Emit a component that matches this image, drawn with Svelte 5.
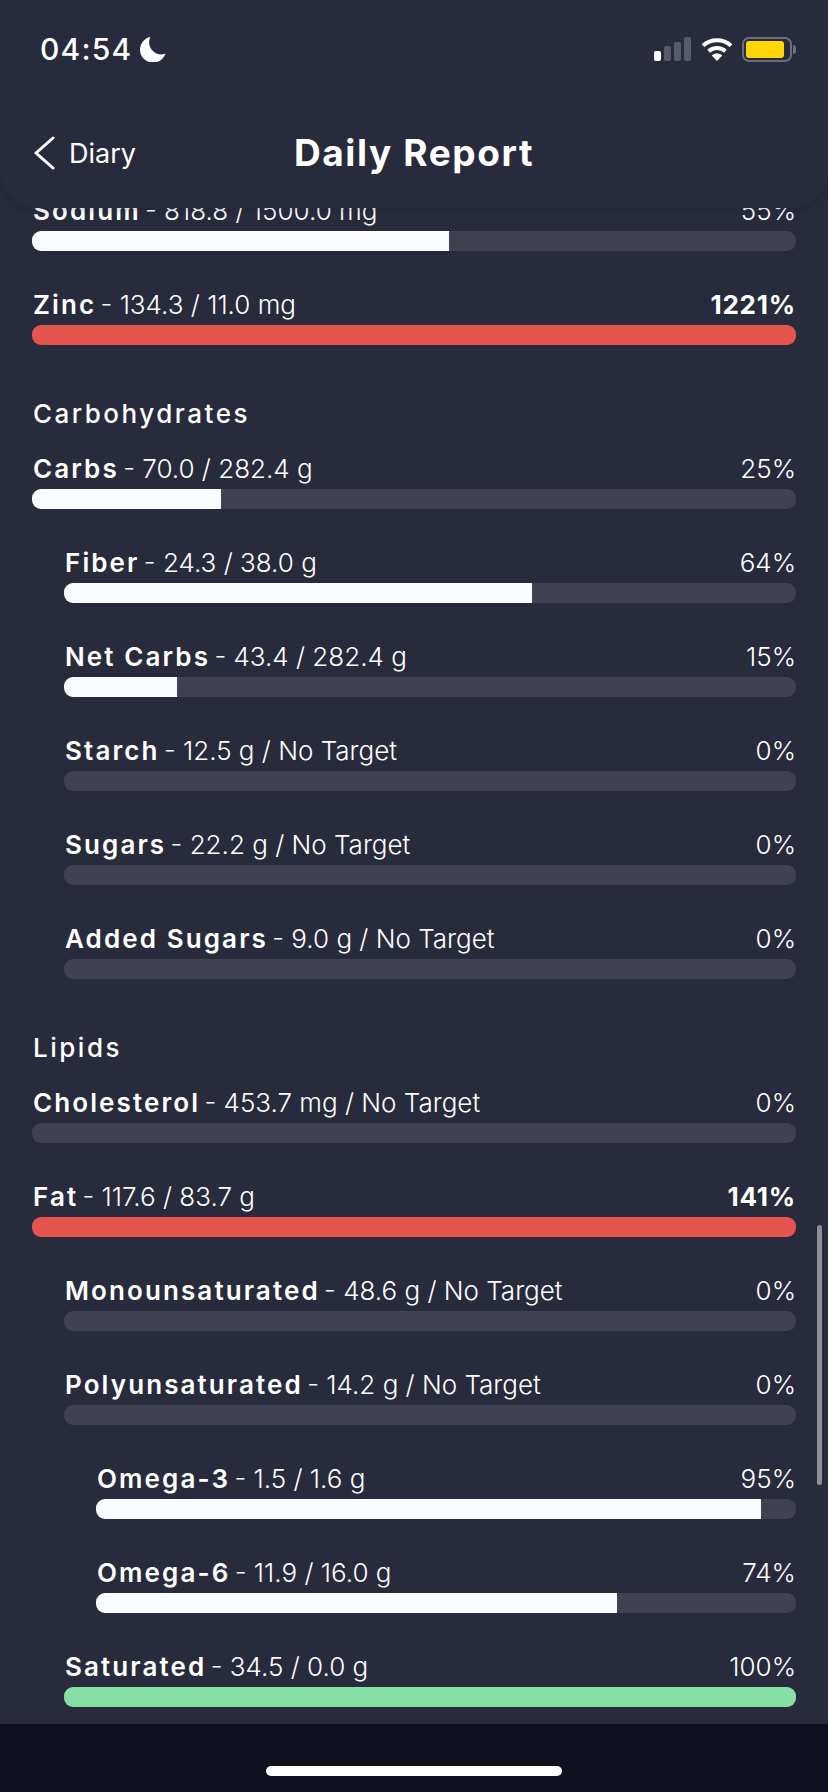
<script>
  const sections = [
    { title: null, rows: [
      { name: 'Sodium', value: '818.8 / 1500.0 mg', pct: 55, width: 54.6 },
      { name: 'Zinc', value: '134.3 / 11.0 mg', pct: 1221, tone: 'over' }
    ]},
    { title: 'Carbohydrates', rows: [
      { name: 'Carbs', value: '70.0 / 282.4 g', pct: 25, width: 24.8 },
      { name: 'Fiber', value: '24.3 / 38.0 g', pct: 64 },
      { name: 'Net Carbs', value: '43.4 / 282.4 g', pct: 15, width: 15.4 },
      { name: 'Starch', value: '12.5 g / No Target', pct: 0 },
      { name: 'Sugars', value: '22.2 g / No Target', pct: 0 },
      { name: 'Added Sugars', value: '9.0 g / No Target', pct: 0 }
    ].map((r, i) => (i ? { ...r, level: 1 } : r)) },
    { title: 'Lipids', rows: [
      { name: 'Cholesterol', value: '453.7 mg / No Target', pct: 0 },
      { name: 'Fat', value: '117.6 / 83.7 g', pct: 141, tone: 'over' },
      { name: 'Monounsaturated', value: '48.6 g / No Target', pct: 0, level: 1 },
      { name: 'Polyunsaturated', value: '14.2 g / No Target', pct: 0, level: 1 },
      { name: 'Omega-3', value: '1.5 / 1.6 g', pct: 95, level: 2 },
      { name: 'Omega-6', value: '11.9 / 16.0 g', pct: 74, width: 74.4, level: 2 },
      { name: 'Saturated', value: '34.5 / 0.0 g', pct: 100, level: 1, tone: 'good' }
    ]}
  ];
</script>

<div class="page">
  <header class="top">
    <div class="status">
      <div class="clock">
        <span>04:54</span>
        <svg class="moon" viewBox="0 0 24 24" width="26" height="26"><path fill="#fff" d="M9.6 0.6C4 2 0 7 0 12.8 0 19.5 5.4 24.6 12 24.6c5.4 0 10-3.4 11.6-8.4-1.2.5-2.6.8-4 .8-6.2 0-11.2-5-11.2-11.2 0-1.9.5-3.6 1.2-5.2z"/></svg>
      </div>
      <div class="indicators">
        <div class="signal">
          <i class="on s1"></i><i class="s2"></i><i class="s3"></i><i class="s4"></i>
        </div>
        <svg class="wifi" viewBox="0 0 32 24" width="32" height="24">
          <path fill="none" stroke="#fff" stroke-width="4" d="M2 8.6C9.8 1.4 22.2 1.4 30 8.6"/>
          <path fill="none" stroke="#fff" stroke-width="4" d="M7.6 14.2c4.8-4.2 12-4.2 16.8 0"/>
          <path fill="#fff" d="M16 24l-5.2-5.6c3-2.4 7.4-2.4 10.4 0z"/>
        </svg>
        <div class="battery"><div class="charge"></div></div>
        <div class="nub"></div>
      </div>
    </div>
    <div class="nav">
      <div class="back">
        <svg viewBox="0 0 22 34" width="22" height="34"><path fill="none" stroke="#fff" stroke-width="3" stroke-linecap="round" stroke-linejoin="round" d="M20 2L3 17l17 15"/></svg>
        <span>Diary</span>
      </div>
      <h1>Daily Report</h1>
    </div>
  </header>

  <main class="list">
    {#each sections as s}
      <section>
        {#if s.title}<h2>{s.title}</h2>{/if}
        {#each s.rows as r}
          <div class="row lvl{r.level ?? 0}">
            <div class="line">
              <span class="text"><b>{r.name}</b><span class="dash">{' - '}</span>{r.value}</span>
              <span class="pct" class:strong={r.tone === 'over'}>{r.pct}%</span>
            </div>
            <div class="track">
              <div class="fill {r.tone ?? ''}" style="width:{r.width ?? Math.min(r.pct, 100)}%"></div>
            </div>
          </div>
        {/each}
      </section>
    {/each}
    <div class="scrollbar"></div>
  </main>

  <footer class="home"><div class="indicator"></div></footer>
</div>

<style>
  :global(body) {
    margin: 0;
    background: #282b3c;
  }
  .page {
    width: 828px;
    height: 1792px;
    display: flex;
    flex-direction: column;
    background: #282b3c;
    color: #fff;
    font-family: Inter, "Liberation Sans", sans-serif;
    overflow: hidden;
  }
  .top {
    position: relative;
    z-index: 2;
    flex: none;
    height: 208px;
    box-sizing: border-box;
    background: #282b3c;
    border-radius: 0 0 36px 36px;
    box-shadow: 0 2px 6px rgba(20, 22, 34, 0.2);
  }
  .status {
    height: 98px;
    display: flex;
    justify-content: space-between;
    align-items: center;
    padding: 0 32px 0 40px;
  }
  .clock {
    display: flex;
    align-items: center;
    gap: 8px;
    font-size: 30px;
    font-weight: 500;
    letter-spacing: 1.2px;
  }
  .moon { display: block; }
  .indicators {
    display: flex;
    align-items: center;
  }
  .signal {
    display: flex;
    align-items: flex-end;
    gap: 3px;
    height: 24px;
    margin-right: 10px;
  }
  .signal i {
    width: 7px;
    border-radius: 2px;
    background: #575a6a;
  }
  .signal .on { background: #fff; }
  .s1 { height: 10px; }
  .s2 { height: 15px; }
  .s3 { height: 19px; }
  .s4 { height: 24px; }
  .battery {
    box-sizing: border-box;
    width: 50px;
    height: 25px;
    margin-left: 9px;
    padding: 2px;
    border: 2px solid #6b6e7c;
    border-radius: 7px;
  }
  .charge {
    width: 38px;
    height: 100%;
    background: #ffd60a;
    border-radius: 3px;
  }
  .nub {
    width: 3px;
    height: 9px;
    margin-left: 1px;
    background: #6b6e7c;
    border-radius: 0 3px 3px 0;
  }
  .nav {
    position: relative;
    height: 110px;
    display: flex;
    align-items: center;
    padding: 0 0 0 33px;
    box-sizing: border-box;
  }
  .back {
    display: flex;
    align-items: center;
    gap: 14px;
    font-size: 27px;
    font-weight: 400;
  }
  .back svg { display: block; }
  h1 {
    position: absolute;
    left: 0;
    right: 0;
    top: 33px;
    margin: 0;
    text-align: center;
    font-size: 37px;
    line-height: 44px;
    font-weight: 700;
    letter-spacing: 1.6px;
  }
  .list {
    position: relative;
    flex: 1;
    min-height: 0;
    margin-top: -51px;
    padding: 36px 32px 0;
    overflow: hidden;
  }
  section h2 {
    margin: 51px 0 19px 1px;
    font-size: 26px;
    line-height: 36px;
    font-weight: 500;
    letter-spacing: 2.5px;
  }
  .row + .row { margin-top: 36px; }
  .lvl1 { padding-left: 32px; }
  .lvl2 { padding-left: 64px; }
  .line {
    display: flex;
    justify-content: space-between;
    align-items: baseline;
    height: 36px;
    line-height: 36px;
    margin-bottom: 2px;
    padding: 0 0 0 1px;
    font-size: 26px;
    font-weight: 300;
  }
  .dash {
    white-space: pre;
    margin-left: -3px;
  }
  .line b {
    font-weight: 600;
    letter-spacing: 2.1px;
  }
  .strong {
    font-weight: 700;
    letter-spacing: 0.8px;
  }
  .track {
    height: 20px;
    border-radius: 9px;
    background: #404252;
    overflow: hidden;
  }
  .fill {
    height: 100%;
    background: #fafbff;
  }
  .fill.over { background: #e5554e; }
  .fill.good { background: #86e0a5; }
  .scrollbar {
    position: absolute;
    right: 6px;
    top: 1068px;
    width: 5px;
    height: 260px;
    border-radius: 3px;
    background: #8d8e96;
  }
  .home {
    flex: none;
    height: 68px;
    position: relative;
    z-index: 1;
    display: flex;
    justify-content: center;
    padding-top: 42px;
    box-sizing: border-box;
    background: #10111f;
  }
  .indicator {
    width: 296px;
    height: 10px;
    border-radius: 5px;
    background: #fff;
  }
</style>
